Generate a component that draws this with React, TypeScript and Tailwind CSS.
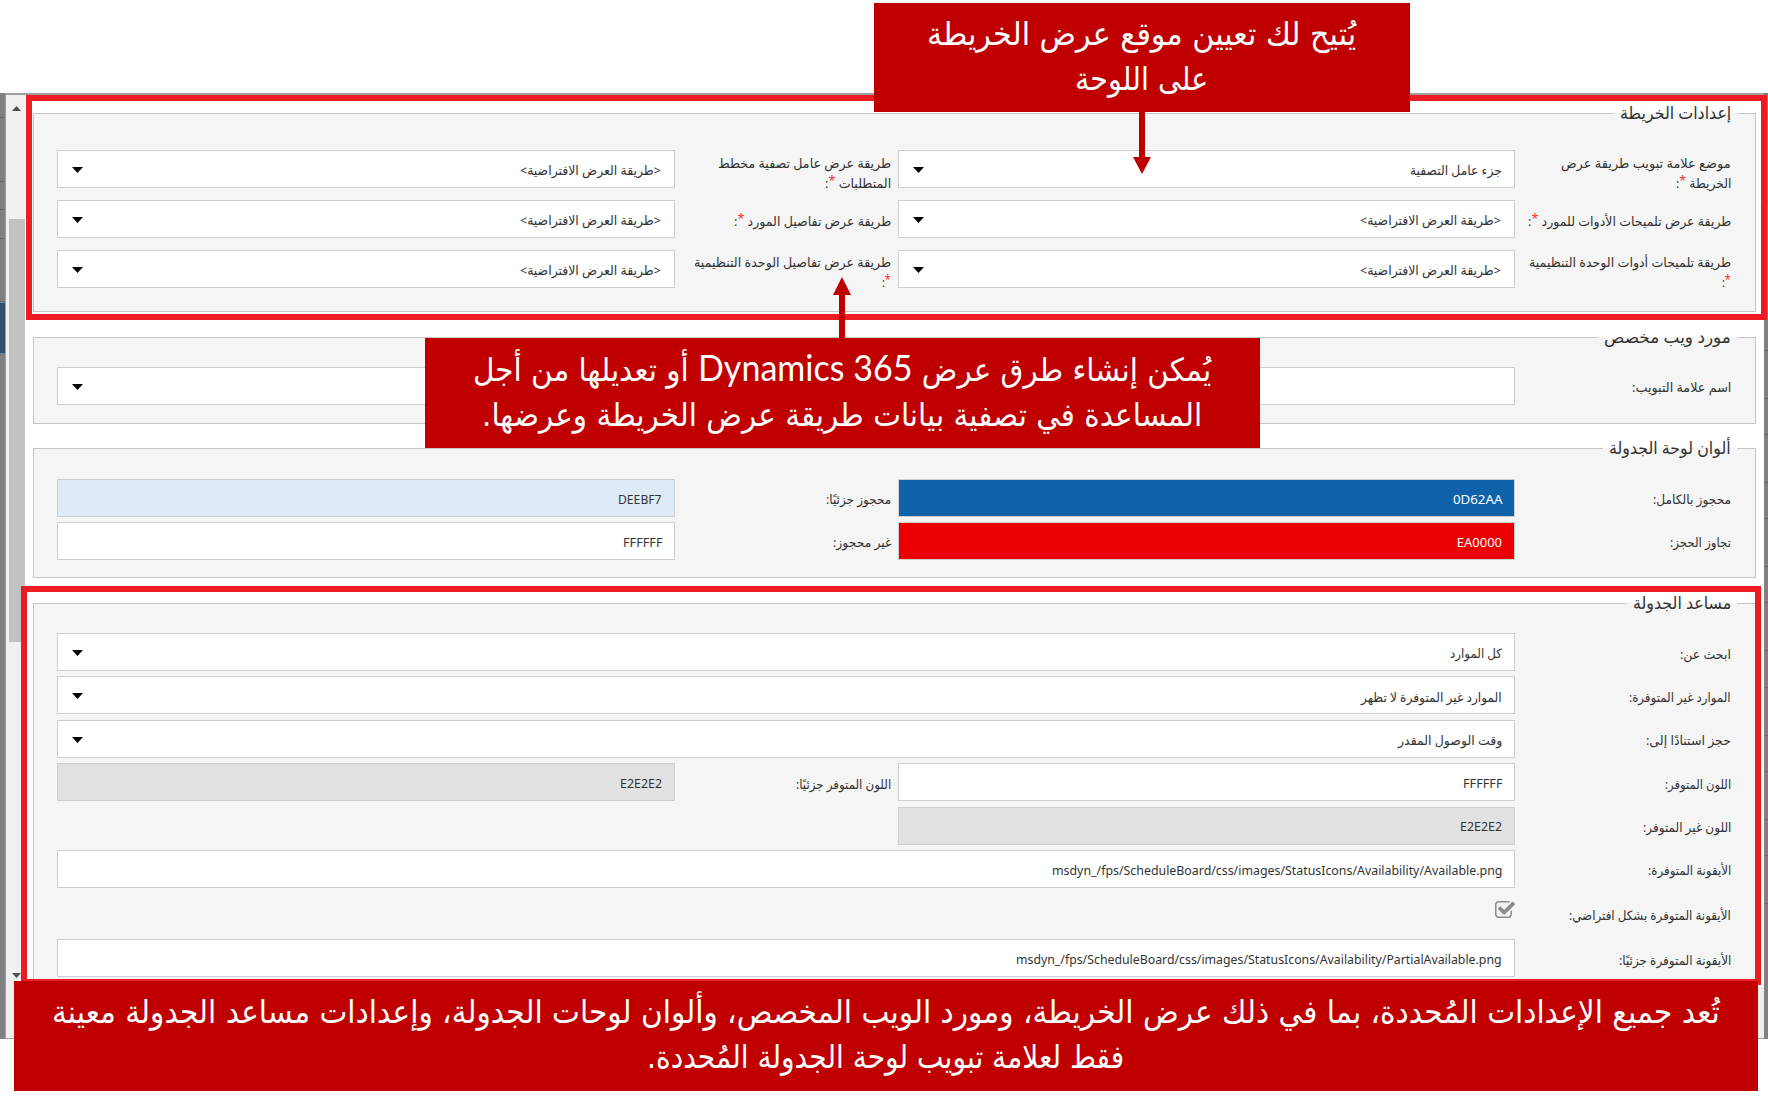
import { useLayoutEffect, useRef, useState } from "react";
import type { ReactNode } from "react";

/* Text scaled horizontally so that it takes exactly `w` pixels. */
function Fit({ w, children, dir = "rtl" }: { w: number; children: ReactNode; dir?: "rtl" | "ltr" }) {
  const ref = useRef<HTMLSpanElement>(null);
  const [scale, setScale] = useState(1);
  useLayoutEffect(() => {
    if (ref.current && ref.current.offsetWidth) setScale(w / ref.current.offsetWidth);
  }, [w]);
  return (
    <span className="flex shrink-0 justify-start whitespace-nowrap" style={{ width: w }}>
      <span ref={ref} dir={dir} className="inline-block shrink-0 origin-right" style={{ transform: `scaleX(${scale})` }}>
        {children}
      </span>
    </span>
  );
}

type Line = { t: string; w: number; req?: boolean };

function Label({ lines, className = "pt-[3px]" }: { lines: Line[]; className?: string }) {
  return (
    <div className={`flex flex-col justify-center text-[13px] leading-[20px] text-[#333] ${className}`}>
      {lines.map((l, i) => (
        <Fit key={i} w={l.w}>
          {l.t}
          {l.req && (
            <>
              {l.t ? " " : ""}
              <span className="relative -top-[3px] text-[#ff2a2a]">*</span>:
            </>
          )}
        </Fit>
      ))}
    </div>
  );
}

function Field({ text, w, caret, dir = "rtl", tone = "bg-white text-[#333]", pad = "pr-3" }: {
  text?: string; w?: number; caret?: boolean; dir?: "rtl" | "ltr"; tone?: string; pad?: string;
}) {
  return (
    <div className={`flex h-[38px] items-center justify-between border border-[#cfcfcf] pl-[14px] text-[13px] ${pad} ${tone}`}>
      <div className={dir === "rtl" ? "pt-1" : "pt-[3px]"}>{text && <Fit w={w ?? 0} dir={dir}>{text}</Fit>}</div>
      {caret && (
        <svg width="11" height="6" viewBox="0 0 11 6" className="mt-0.5 fill-black">
          <path d="M0 0h11L5.5 6z" />
        </svg>
      )}
    </div>
  );
}

function Section({ title, w, className = "", children }: { title: string; w: number; className?: string; children: ReactNode }) {
  return (
    <section className={`relative border border-[#c6c6c6] bg-[#f5f5f5] pr-6 pl-[23px] ${className}`}>
      <h2 className="absolute -top-[15px] right-[18px] bg-[linear-gradient(#fff_50%,#f5f5f5_50%)] px-1.5 text-[17px] leading-[28px] text-[#333]">
        <Fit w={w}>{title}</Fit>
      </h2>
      {children}
    </section>
  );
}

const row = "grid grid-cols-[216px_617px_7px_216px_618px]";
const wide = "grid grid-cols-[216px_1458px]";
const DEF = "<طريقة العرض الافتراضية>";

const mapRows: { a: Line[]; av: string; aw: number; b: Line[]; h: string; pad: string }[] = [
  {
    a: [{ t: "موضع علامة تبويب طريقة عرض", w: 170 }, { t: "الخريطة", w: 55, req: true }],
    av: "جزء عامل التصفية", aw: 92,
    b: [{ t: "طريقة عرض عامل تصفية مخطط", w: 173 }, { t: "المتطلبات", w: 66, req: true }],
    h: "pt-1 -mt-px", pad: "pr-3",
  },
  {
    a: [{ t: "طريقة عرض تلميحات الأدوات للمورد", w: 203, req: true }], av: DEF, aw: 141,
    b: [{ t: "طريقة عرض تفاصيل المورد", w: 157, req: true }],
    h: "pt-[3px]", pad: "pr-[13px]",
  },
  {
    a: [{ t: "طريقة تلميحات أدوات الوحدة التنظيمية", w: 202 }, { t: "", w: 9, req: true }], av: DEF, aw: 141,
    b: [{ t: "طريقة عرض تفاصيل الوحدة التنظيمية", w: 197 }, { t: "", w: 9, req: true }],
    h: "pt-[3px] -mt-px", pad: "pr-[13px]",
  },
];

function Callout({ lines, className }: { lines: { w: number; n: ReactNode }[]; className: string }) {
  return (
    <div dir="rtl" className={`absolute flex flex-col items-center bg-[#c00000] font-['DejaVu_Sans'] text-[32px] leading-[45px] text-white ${className}`}>
      {lines.map((l, i) => <Fit key={i} w={l.w}>{l.n}</Fit>)}
    </div>
  );
}

const leftSegs = ["h-[25px]", "h-[64px]", "h-[28px]", "h-[29px]", "h-[63px]"];
const rightSegs = ["h-[25px]", "h-[84px]", "h-[112px]", "h-[37px]", "h-[48px]", "h-[36px]", "h-[48px]", "h-[36px]", "h-[48px]", "h-[36px]", "h-[48px]", "h-[37px]", "h-[48px]", "h-[36px]", "h-[48px]", "h-[36px]", "h-[48px]"];

export default function App() {
  return (
    <div className="relative flex h-[1104px] w-[1768px] flex-col overflow-hidden bg-white pt-[93px] font-['Noto_Sans','DejaVu_Sans',sans-serif]">
      <div className="flex h-[946px] bg-[#808080]">
        <div className="w-[5px] shrink-0">
          {leftSegs.map((s, i) => <div key={i} className={`border-b border-[#6c6c6c] ${s}`} />)}
          <div className="mt-px h-[50px] bg-[#2f4f6d]" />
        </div>

        <div className="flex w-[1759px] shrink-0 flex-col border-t-2 border-b border-l border-[#a0a0a0] bg-white">
          <div className="flex h-[892px] overflow-hidden">
            <div className="flex w-[19px] shrink-0 flex-col items-end bg-[#f0f0f0]">
              <svg width="16" height="124" viewBox="0 0 16 124" className="fill-[#505050]"><path d="M3 16l4.5-5 4.5 5z" /></svg>
              <div className="h-[423px] w-4 bg-[#c1c1c1]" />
              <svg width="16" height="345" viewBox="0 0 16 345" className="fill-[#505050]"><path d="M3 331h9l-4.5 5z" /></svg>
            </div>

            <div dir="rtl" className="flex w-[1739px] flex-col pt-[18px] pr-2 pl-2">
              <Section title="إعدادات الخريطة" w={111} className="h-[199px] w-[1723px] shrink-0 pt-9">
                <div className="flex flex-col gap-3">
                  {mapRows.map((r, i) => (
                    <div key={i} className={`${row} h-[38px]`}>
                      <Label lines={r.a} className={r.h} />
                      <Field text={r.av} w={r.aw} caret pad={r.pad} />
                      <div />
                      <Label lines={r.b} className={r.h} />
                      <Field text={DEF} w={141} caret pad="pr-[13px]" />
                    </div>
                  ))}
                </div>
              </Section>

              <Section title="مورد ويب مخصص" w={127} className="mt-[25px] h-[87px] w-[1723px] shrink-0 pt-[29px]">
                <div className={wide}>
                  <Label lines={[{ t: "اسم علامة التبويب:", w: 99 }]} className="pt-0.5" />
                  <Field caret />
                </div>
              </Section>

              <Section title="ألوان لوحة الجدولة" w={122} className="mt-[24px] h-[130px] w-[1723px] shrink-0 pt-[30px]">
                <div className="flex flex-col gap-[5px]">
                  <div className={row}>
                    <Label lines={[{ t: "محجوز بالكامل:", w: 78 }]} className="pt-0.5" />
                    <Field text="0D62AA" w={49} dir="ltr" tone="bg-[#0d62aa] text-white" />
                    <div />
                    <Label lines={[{ t: "محجوز جزئيًا:", w: 65 }]} className="pt-0.5" />
                    <Field text="DEEBF7" w={44} dir="ltr" tone="bg-[#deebf7] text-[#333]" />
                  </div>
                  <div className={row}>
                    <Label lines={[{ t: "تجاوز الحجز:", w: 61 }]} className="pt-0.5" />
                    <Field text="EA0000" w={45} dir="ltr" tone="bg-[#ea0000] text-white" />
                    <div />
                    <Label lines={[{ t: "غير محجوز:", w: 59 }]} className="pt-0.5" />
                    <Field text="FFFFFF" w={39} dir="ltr" />
                  </div>
                </div>
              </Section>

              <Section title="مساعد الجدولة" w={98} className="mt-[25px] h-[420px] w-[1723px] shrink-0 pt-[29px]">
                <div className="flex flex-col gap-[5.4px]">
                  <div className={wide}>
                    <Label lines={[{ t: "ابحث عن:", w: 51 }]} />
                    <Field text="كل الموارد" w={52} caret />
                  </div>
                  <div className={wide}>
                    <Label lines={[{ t: "الموارد غير المتوفرة:", w: 102 }]} />
                    <Field text="الموارد غير المتوفرة لا تظهر" w={141} caret />
                  </div>
                  <div className={wide}>
                    <Label lines={[{ t: "حجز استنادًا إلى:", w: 85 }]} />
                    <Field text="وقت الوصول المقدر" w={104} caret />
                  </div>
                  <div className={row}>
                    <Label lines={[{ t: "اللون المتوفر:", w: 66 }]} />
                    <Field text="FFFFFF" w={39} dir="ltr" />
                    <div />
                    <Label lines={[{ t: "اللون المتوفر جزئيًا:", w: 95 }]} />
                    <Field text="E2E2E2" w={42} dir="ltr" tone="bg-[#e1e1e1] text-[#333]" />
                  </div>
                  <div className={row}>
                    <Label lines={[{ t: "اللون غير المتوفر:", w: 88 }]} />
                    <Field text="E2E2E2" w={42} dir="ltr" tone="bg-[#e1e1e1] text-[#333]" />
                  </div>
                  <div className={wide}>
                    <Label lines={[{ t: "الأيقونة المتوفرة:", w: 83 }]} />
                    <Field text="msdyn_/fps/ScheduleBoard/css/images/StatusIcons/Availability/Available.png" w={450} dir="ltr" />
                  </div>
                  <div className={`${wide} h-[40.5px]`}>
                    <Label lines={[{ t: "الأيقونة المتوفرة بشكل افتراضي:", w: 162 }]} />
                    <svg width="20" height="17" viewBox="0 128 1664 1408" className="mt-2 fill-[#8c8c8c]">
                      <path d="M1408 930v318q0 119-84.5 203.5t-203.5 84.5h-832q-119 0-203.5-84.5t-84.5-203.5v-832q0-119 84.5-203.5t203.5-84.5h832q63 0 117 25 15 7 18 23 3 17-9 29l-49 49q-10 10-23 10-3 0-9-2-23-6-45-6h-832q-66 0-113 47t-47 113v832q0 66 47 113t113 47h832q66 0 113-47t47-113v-254q0-13 9-22l64-64q10-10 23-10 6 0 12 3 20 8 20 29zm231-489l-814 814q-24 24-57 24t-57-24l-430-430q-24-24-24-57t24-57l110-110q24-24 57-24t57 24l263 263 647-647q24-24 57-24t57 24l110 110q24 24 24 57t-24 57z" />
                    </svg>
                  </div>
                  <div className={wide}>
                    <Label lines={[{ t: "الأيقونة المتوفرة جزئيًا:", w: 112 }]} />
                    <Field text="msdyn_/fps/ScheduleBoard/css/images/StatusIcons/Availability/PartialAvailable.png" w={486} dir="ltr" />
                  </div>
                </div>
              </Section>
            </div>
          </div>
          <div className="flex-1 bg-[#eee]" />
        </div>

        <div className="w-1 shrink-0">
          {rightSegs.map((s, i) => <div key={i} className={`border-b border-[#6c6c6c] ${s}`} />)}
        </div>
      </div>

      <div className="absolute top-[95px] left-[26px] h-[225px] w-[1741px] border-6 border-[#ed1c24]" />
      <div className="absolute top-[586px] left-[21px] h-[399px] w-[1740px] border-6 border-[#ed1c24]" />

      <svg className="absolute top-[112px] left-[1133px] fill-[#c00000]" width="18" height="62"><path d="M6 0h6v45h6L9 62 0 45h6z" /></svg>
      <svg className="absolute top-[277px] left-[833px] fill-[#c00000]" width="18" height="62"><path d="M6 62h6V18h6L9 0 0 18h6z" /></svg>

      <Callout
        className="top-[3px] left-[874px] h-[109px] w-[536px] pt-[9px]"
        lines={[{ w: 429, n: "يُتيح لك تعيين موقع عرض الخريطة" }, { w: 133, n: "على اللوحة" }]}
      />
      <Callout
        className="top-[338px] left-[425px] h-[110px] w-[835px] pt-[10px]"
        lines={[
          { w: 738, n: <>يُمكن إنشاء طرق عرض <span className="font-['Lato'] text-[37px] leading-[1px]">Dynamics 365</span> أو تعديلها من أجل</> },
          { w: 720, n: "المساعدة في تصفية بيانات طريقة عرض الخريطة وعرضها." },
        ]}
      />
      <Callout
        className="top-[981px] left-[14px] h-[110px] w-[1744px] pt-[9px]"
        lines={[
          { w: 1668, n: "تُعد جميع الإعدادات المُحددة، بما في ذلك عرض الخريطة، ومورد الويب المخصص، وألوان لوحات الجدولة، وإعدادات مساعد الجدولة معينة" },
          { w: 477, n: "فقط لعلامة تبويب لوحة الجدولة المُحددة." },
        ]}
      />
    </div>
  );
}
